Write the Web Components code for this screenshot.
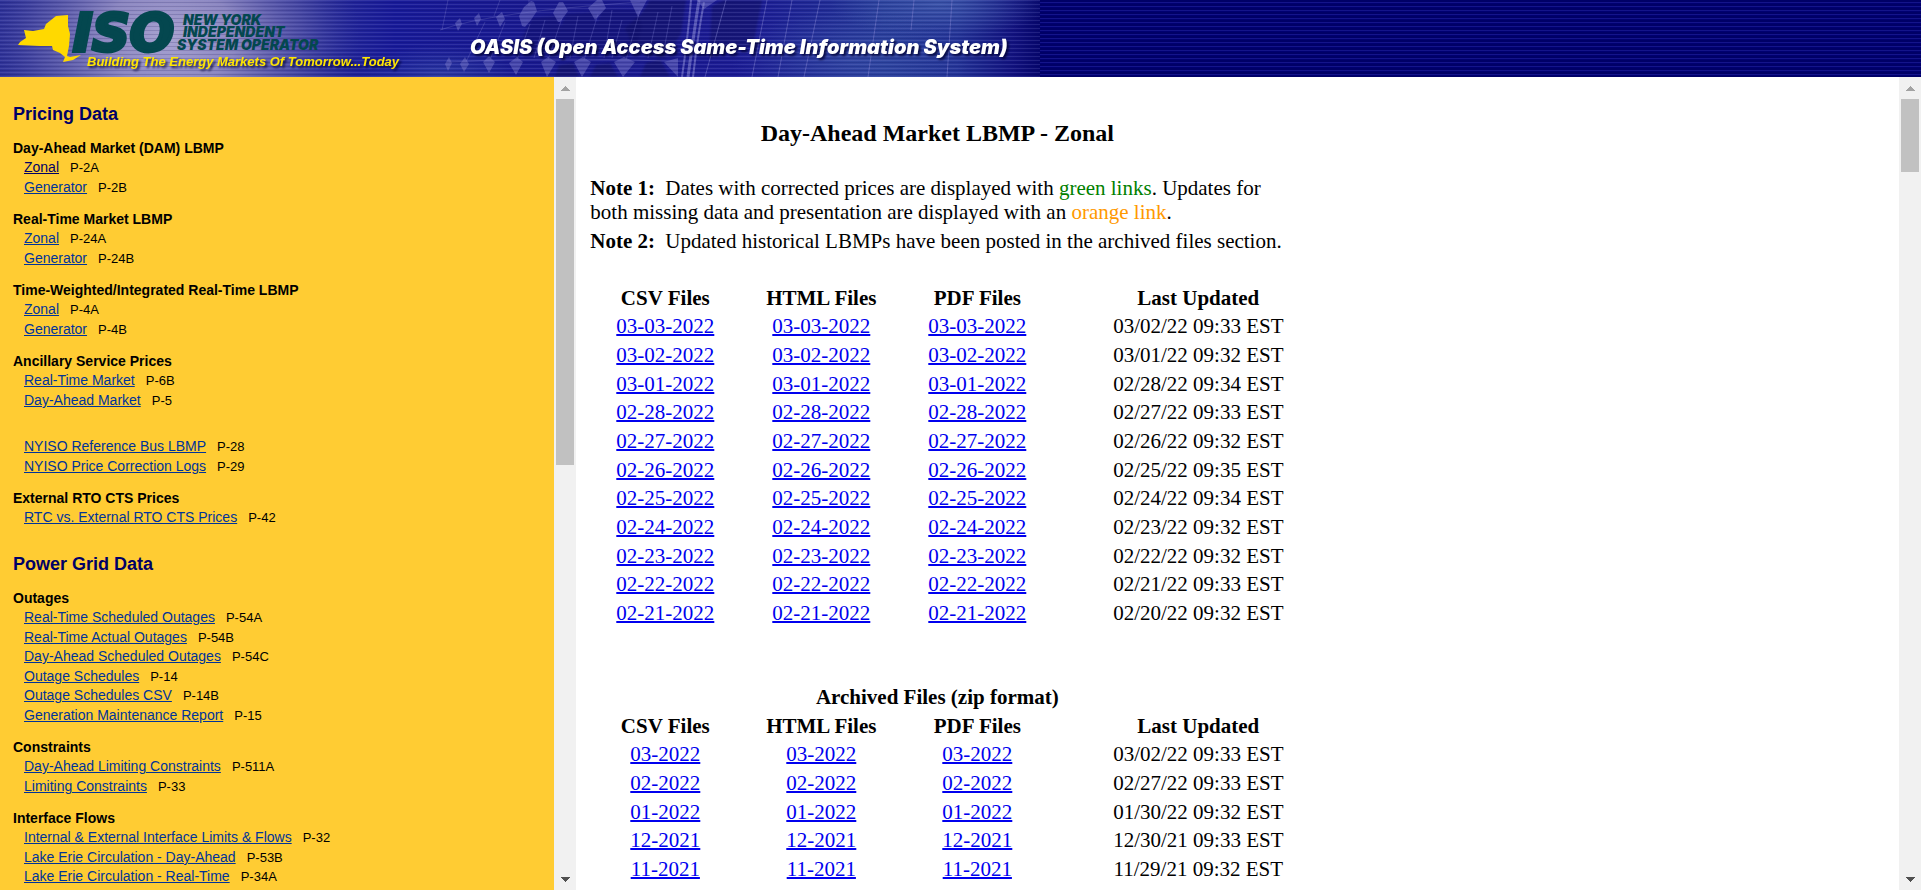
<!DOCTYPE html>
<html lang="en">
<head>
<meta charset="utf-8">
<title>NYISO OASIS</title>
<style>
  html, body { margin: 0; height: 100%; }
  body { background: #fff; overflow: hidden; font-family: "Liberation Serif", "Times New Roman", serif; }
</style>
</head>
<body>
<oasis-app></oasis-app>

<template id="app-template">
  <style>
    :host { display: grid; grid-template-rows: auto minmax(0, 1fr); height: 100vh; }
    .frames { display: grid; grid-template-columns: 30% minmax(0, 1fr); min-height: 0; }
  </style>
  <oasis-banner></oasis-banner>
  <div class="frames">
    <scroll-frame style="--frame-bg:#ffcc33; --thumb:366px"><side-menu></side-menu></scroll-frame>
    <scroll-frame style="--frame-bg:#ffffff; --thumb:73px"><price-report></price-report></scroll-frame>
  </div>
</template>

<template id="frame-template">
  <style>
    :host { display: grid; grid-template-columns: minmax(0, 1fr) 22px; min-height: 0; background: var(--frame-bg); }
    .view { overflow: hidden; min-height: 0; }
    .bar { display: flex; flex-direction: column; align-items: center; background: #f1f1f1; }
    .arrow { flex: none; display: flex; align-items: center; justify-content: center; height: 22px; width: 22px; }
    .thumb { flex: none; width: 18px; height: var(--thumb); background: #c1c1c1; }
    .space { flex: 1; }
  </style>
  <div class="view"><slot></slot></div>
  <div class="bar" aria-hidden="true">
    <div class="arrow"><svg width="10" height="5" viewBox="0 0 10 5" shape-rendering="crispEdges"><path d="M0 5 5 0l5 5z" fill="#a3a3a3"/></svg></div>
    <div class="thumb"></div>
    <div class="space"></div>
    <div class="arrow"><svg width="10" height="5" viewBox="0 0 10 5" shape-rendering="crispEdges"><path d="M0 0h10L5 5z" fill="#505050"/></svg></div>
  </div>
</template>

<template id="banner-template">
  <style>
    :host { display: block; height: 77px; overflow: hidden;
      background: repeating-linear-gradient(#000066 0 2px, #14148a 2px 3px, #000070 3px 4px); }
    svg { display: block; }
    .teal { fill: #04474f; font-family: Inter, sans-serif; font-weight: 900; font-style: italic; }
    .iso { font-family: "DejaVu Sans", sans-serif; font-weight: 700; font-size: 52px; stroke: #04474f; stroke-width: 4px; }
    .name { font-size: 14px; }
    .tag { font: italic 700 13px "Liberation Sans", Arial, sans-serif; fill: #ffe600; }
    .title { font: italic 900 20px Inter, sans-serif; fill: #fff; }
    .shade { filter: drop-shadow(2px 2px 1px rgba(0,0,50,.8)); }
    .soft { filter: blur(1px); }
  </style>
  <svg width="1040" height="77" viewBox="0 0 1040 77" role="img" aria-label="New York ISO OASIS">
    <defs>
      <linearGradient id="base" x1="0" x2="1">
        <stop offset="0" stop-color="#2b2f96"/><stop offset=".1" stop-color="#3b3f9c"/>
        <stop offset=".3" stop-color="#2a2e98"/><stop offset=".38" stop-color="#181a98"/>
        <stop offset=".55" stop-color="#1a1a8c"/><stop offset=".72" stop-color="#1c1c94"/>
        <stop offset=".85" stop-color="#263a98"/><stop offset=".92" stop-color="#243496"/>
        <stop offset=".975" stop-color="#12127e"/><stop offset="1" stop-color="#06066c"/>
      </linearGradient>
      <radialGradient id="glow" cx="170" cy="36" r="190" gradientUnits="userSpaceOnUse" gradientTransform="translate(0 10) scale(1 .75)">
        <stop offset="0" stop-color="#aaa4d0"/><stop offset=".35" stop-color="#9690c4" stop-opacity=".9"/>
        <stop offset=".7" stop-color="#6664ae" stop-opacity=".5"/><stop offset="1" stop-color="#3a3c9c" stop-opacity="0"/>
      </radialGradient>
      <radialGradient id="haze" cx=".5" cy=".5" r=".5">
        <stop offset="0" stop-color="#4a68b4" stop-opacity=".6"/><stop offset="1" stop-color="#4a68b4" stop-opacity="0"/>
      </radialGradient>
      <pattern id="lines" width="4" height="4" patternUnits="userSpaceOnUse">
        <rect width="4" height="1" fill="#9a9ae0" opacity=".17"/><rect y="2" width="4" height="1" fill="#000050" opacity=".16"/>
      </pattern>
    </defs>
    <rect width="1040" height="77" fill="url(#base)"/>
    <rect width="420" height="77" fill="url(#glow)"/>
    <ellipse cx="440" cy="78" rx="80" ry="34" fill="url(#haze)" opacity=".7"/>
    <ellipse cx="940" cy="4" rx="110" ry="34" fill="url(#haze)"/>
    <ellipse cx="850" cy="60" rx="120" ry="50" fill="url(#haze)" opacity=".6"/>
    <g class="soft">
      <path d="M650 0h36l-5 34-16 24-30-6-10-24 16-14zM712 6l12-6h38l-9 46-44 12z" fill="#12125c" opacity=".5"/>
      <path d="M602 10l34 0 6 16-6 24-28 6-16-18zM566 14l26-2 8 18-6 20-24 6-14-18zM532 18l24-2 8 18-6 18-24 4-12-18z" fill="#101068" opacity=".45"/>
      <path d="M640 77l6-14 14-4 10 18zM590 77l6-12 14-2 8 14zM555 77l4-12 14-2 6 14z" fill="#12125c" opacity=".5"/>
    </g>
    <g fill="#7676c8" opacity=".5">
      <path d="M519 16 524 7l7-6 3 1 3 9-6 9-6 7-3-1zM553 13l6-11h4l5 9-8 11h-2zM588 8l9-8h5l4 8-11 12zM630 0h17l-9 17zM697 0h20l-13 9zM496 17l6-5 3 7-5 8zM474 18l5-5 2 6-4 7zM455 23l5-5 2 6-4 7z"/>
      <path d="M445 64l4-7 3 6-4 8zM460 64l5-7 4 7-5 8zM483 62l6-6 6 6-6 11zM509 63l8-6 6 5-7 13zM541 62l7-5 8 5-9 15zM574 62l9-5 8 5-9 15zM614 62l10-5 11 5-12 15zM664 62l14-4 0 19z"/>
    </g>
    <g fill="none" stroke="#6c6cc4" stroke-width="1" opacity=".4">
      <path d="M440 30Q490 12 640 2M449 62Q560 56 690 62M530 24 517 60M562 18 548 60M598 14 584 60M640 10 626 60M485 22 466 62M505 22 490 60M448 0 442 30M578 16 570 58M612 10 604 58M622 20 612 58M658 12 648 58M545 20 534 58M672 6 664 50M500 0 494 16M529 0v6"/>
    </g>
    <g fill="none" stroke="#8484d2" opacity=".6">
      <path stroke-width="3" d="M699 0Q694 32 688 77"/>
      <path stroke-width="2" d="M691 0Q688 36 682 77M704 2Q698 34 693 77"/>
      <path d="M726 0 705 77M767 0 752 77M792 0 778 77M820 0 804 77M879 0 868 77M952 0 947 77M914 0 911 30" opacity=".8"/>
    </g>
    <rect width="1040" height="77" fill="url(#lines)"/>
    <path d="M18 45 20 42 26 38 24 30 33 31 44 29 46 24 56 16 68 15 68 26 70 34 69 46 67 56 70 57 81 55 73 60 63 62 65 57 60 53 53 50 52 46 40 46z" fill="#ffd900"/>
    <g class="teal">
      <text class="iso" x="73" y="51">ISO</text>
      <text class="name" x="183" y="25">NEW YORK</text>
      <text class="name" x="183" y="37">INDEPENDENT</text>
      <text class="name" x="177" y="50">SYSTEM OPERATOR</text>
    </g>
    <g class="shade">
      <text class="tag" x="87" y="66">Building The Energy Markets Of Tomorrow...Today</text>
      <text class="title" x="470" y="54">OASIS (Open Access Same-Time Information System)</text>
    </g>
  </svg>
</template>

<script>
  const fromTemplate = (host, id) => {
    const root = host.attachShadow({ mode: "open" });
    root.append(document.getElementById(id).content.cloneNode(true));
    return root;
  };

  customElements.define("oasis-app", class extends HTMLElement {
    constructor() { super(); fromTemplate(this, "app-template"); }
  });
  customElements.define("scroll-frame", class extends HTMLElement {
    constructor() { super(); fromTemplate(this, "frame-template"); }
  });
  customElements.define("oasis-banner", class extends HTMLElement {
    constructor() { super(); fromTemplate(this, "banner-template"); }
  });

  const MENU = [
    ["Pricing Data", [
      ["Day-Ahead Market (DAM) LBMP", [["Zonal", "P-2A", true], ["Generator", "P-2B"]]],
      ["Real-Time Market LBMP", [["Zonal", "P-24A"], ["Generator", "P-24B"]]],
      ["Time-Weighted/Integrated Real-Time LBMP", [["Zonal", "P-4A"], ["Generator", "P-4B"]]],
      ["Ancillary Service Prices", [["Real-Time Market", "P-6B"], ["Day-Ahead Market", "P-5"]]],
      ["", [["NYISO Reference Bus LBMP", "P-28"], ["NYISO Price Correction Logs", "P-29"]]],
      ["External RTO CTS Prices", [["RTC vs. External RTO CTS Prices", "P-42"]]]
    ]],
    ["Power Grid Data", [
      ["Outages", [["Real-Time Scheduled Outages", "P-54A"], ["Real-Time Actual Outages", "P-54B"],
        ["Day-Ahead Scheduled Outages", "P-54C"], ["Outage Schedules", "P-14"],
        ["Outage Schedules CSV", "P-14B"], ["Generation Maintenance Report", "P-15"]]],
      ["Constraints", [["Day-Ahead Limiting Constraints", "P-511A"], ["Limiting Constraints", "P-33"]]],
      ["Interface Flows", [["Internal &amp; External Interface Limits &amp; Flows", "P-32"],
        ["Lake Erie Circulation - Day-Ahead", "P-53B"], ["Lake Erie Circulation - Real-Time", "P-34A"]]]
    ]]
  ];

  customElements.define("menu-group", class extends HTMLElement {
    constructor() {
      super();
      this.attachShadow({ mode: "open" }).innerHTML = `
        <style>
          :host { display: block; margin-bottom: 12px; }
          h3 { margin: 0; font-size: 14px; line-height: 20px; }
          .links { padding-left: 11px; }
          :host([untitled]) .links { padding-top: 15px; }
        </style>
        ${this.hasAttribute("untitled") ? "" : "<h3><slot name='title'></slot></h3>"}
        <div class="links" role="list"><slot></slot></div>`;
    }
  });
  customElements.define("menu-link", class extends HTMLElement {
    constructor() {
      super();
      this.attachShadow({ mode: "open" }).innerHTML = `
        <style>
          :host { display: block; height: 20px; line-height: 19px; font-size: 14px; }
          :host(:nth-of-type(even)) { height: 19px; }
          a { color: #003399; }
          :host([current]) a { color: #000066; }
          span { margin-left: 11px; font-size: 13px; }
        </style>
        <a href="#"><slot></slot></a><span>${this.getAttribute("code")}</span>`;
    }
  });
  customElements.define("side-menu", class extends HTMLElement {
    constructor() {
      super();
      const group = ([name, links]) => `<menu-group ${name ? "" : "untitled"}>
        ${name ? `<span slot="title">${name}</span>` : ""}
        ${links.map(([t, c, cur]) => `<menu-link role="listitem" code="${c}" ${cur ? "current" : ""}>${t}</menu-link>`).join("")}
      </menu-group>`;
      this.attachShadow({ mode: "open" }).innerHTML = `
        <style>
          :host { display: block; padding: 25px 13px 0; color: #000; font-family: "Liberation Sans", Arial, sans-serif; }
          h2 { margin: 0 0 12px; font-size: 18px; line-height: 24px; color: #000066; }
          section { margin-bottom: 24px; }
        </style>
        <nav>${MENU.map(([t, gs]) => `<section><h2>${t}</h2>${gs.map(group).join("")}</section>`).join("")}</nav>`;
    }
  });

  const DAILY = [
    ["03-03-2022", "03/02/22 09:33 EST"], ["03-02-2022", "03/01/22 09:32 EST"], ["03-01-2022", "02/28/22 09:34 EST"],
    ["02-28-2022", "02/27/22 09:33 EST"], ["02-27-2022", "02/26/22 09:32 EST"], ["02-26-2022", "02/25/22 09:35 EST"],
    ["02-25-2022", "02/24/22 09:34 EST"], ["02-24-2022", "02/23/22 09:32 EST"], ["02-23-2022", "02/22/22 09:32 EST"],
    ["02-22-2022", "02/21/22 09:33 EST"], ["02-21-2022", "02/20/22 09:32 EST"]
  ];
  const ARCHIVE = [
    ["03-2022", "03/02/22 09:33 EST"], ["02-2022", "02/27/22 09:33 EST"], ["01-2022", "01/30/22 09:32 EST"],
    ["12-2021", "12/30/21 09:33 EST"], ["11-2021", "11/29/21 09:32 EST"]
  ];

  customElements.define("file-table", class extends HTMLElement {
    constructor() {
      super();
      const archive = this.hasAttribute("archive");
      const rows = archive ? ARCHIVE : DAILY;
      this.attachShadow({ mode: "open" }).innerHTML = `
        <style>
          :host { display: block; }
          table { width: 100%; table-layout: fixed; border-collapse: collapse; font-size: 21px; line-height: 24px; text-align: center; }
          caption { font-weight: 700; line-height: 28px; }
          col.file { width: 156px; }
          th, td { padding: 0; }
          th:last-child, td:last-child { padding-left: 54px; }
          tr { height: 29px; }
          tbody tr:nth-child(3n + 1) { height: 28px; }
          a { color: #0000ee; text-decoration-thickness: 2px; }
        </style>
        <table>
          ${archive ? "<caption>Archived Files (zip format)</caption>" : ""}
          <colgroup><col class="file"><col class="file"><col class="file"><col></colgroup>
          <thead><tr><th>CSV Files</th><th>HTML Files</th><th>PDF Files</th><th>Last Updated</th></tr></thead>
          <tbody>${rows.map(([d, u]) => `<tr>${`<td><a href="#">${d}</a></td>`.repeat(3)}<td>${u}</td></tr>`).join("")}</tbody>
        </table>`;
    }
  });

  customElements.define("price-report", class extends HTMLElement {
    constructor() {
      super();
      this.attachShadow({ mode: "open" }).innerHTML = `
        <style>
          :host { display: block; max-width: 700px; padding: 42px 11px 0; color: #000; }
          h1 { margin: 0 0 29px; font-size: 24px; line-height: 28px; text-align: center; }
          p { margin: 0 0 5px 3px; font-size: 21px; line-height: 24px; }
          b { margin-right: 5px; }
          .green { color: #008000; }
          .orange { color: #ff9900; }
          file-table { margin-top: 30px; }
          file-table[archive] { margin-top: 56px; }
        </style>
        <h1>Day-Ahead Market LBMP - Zonal</h1>
        <p><b>Note 1:</b> Dates with corrected prices are displayed with <span class="green">green links</span>. Updates for both missing data and presentation are displayed with an <span class="orange">orange link</span>.</p>
        <p><b>Note 2:</b> Updated historical LBMPs have been posted in the archived files section.</p>
        <file-table></file-table>
        <file-table archive></file-table>`;
    }
  });
</script>
</body>
</html>
